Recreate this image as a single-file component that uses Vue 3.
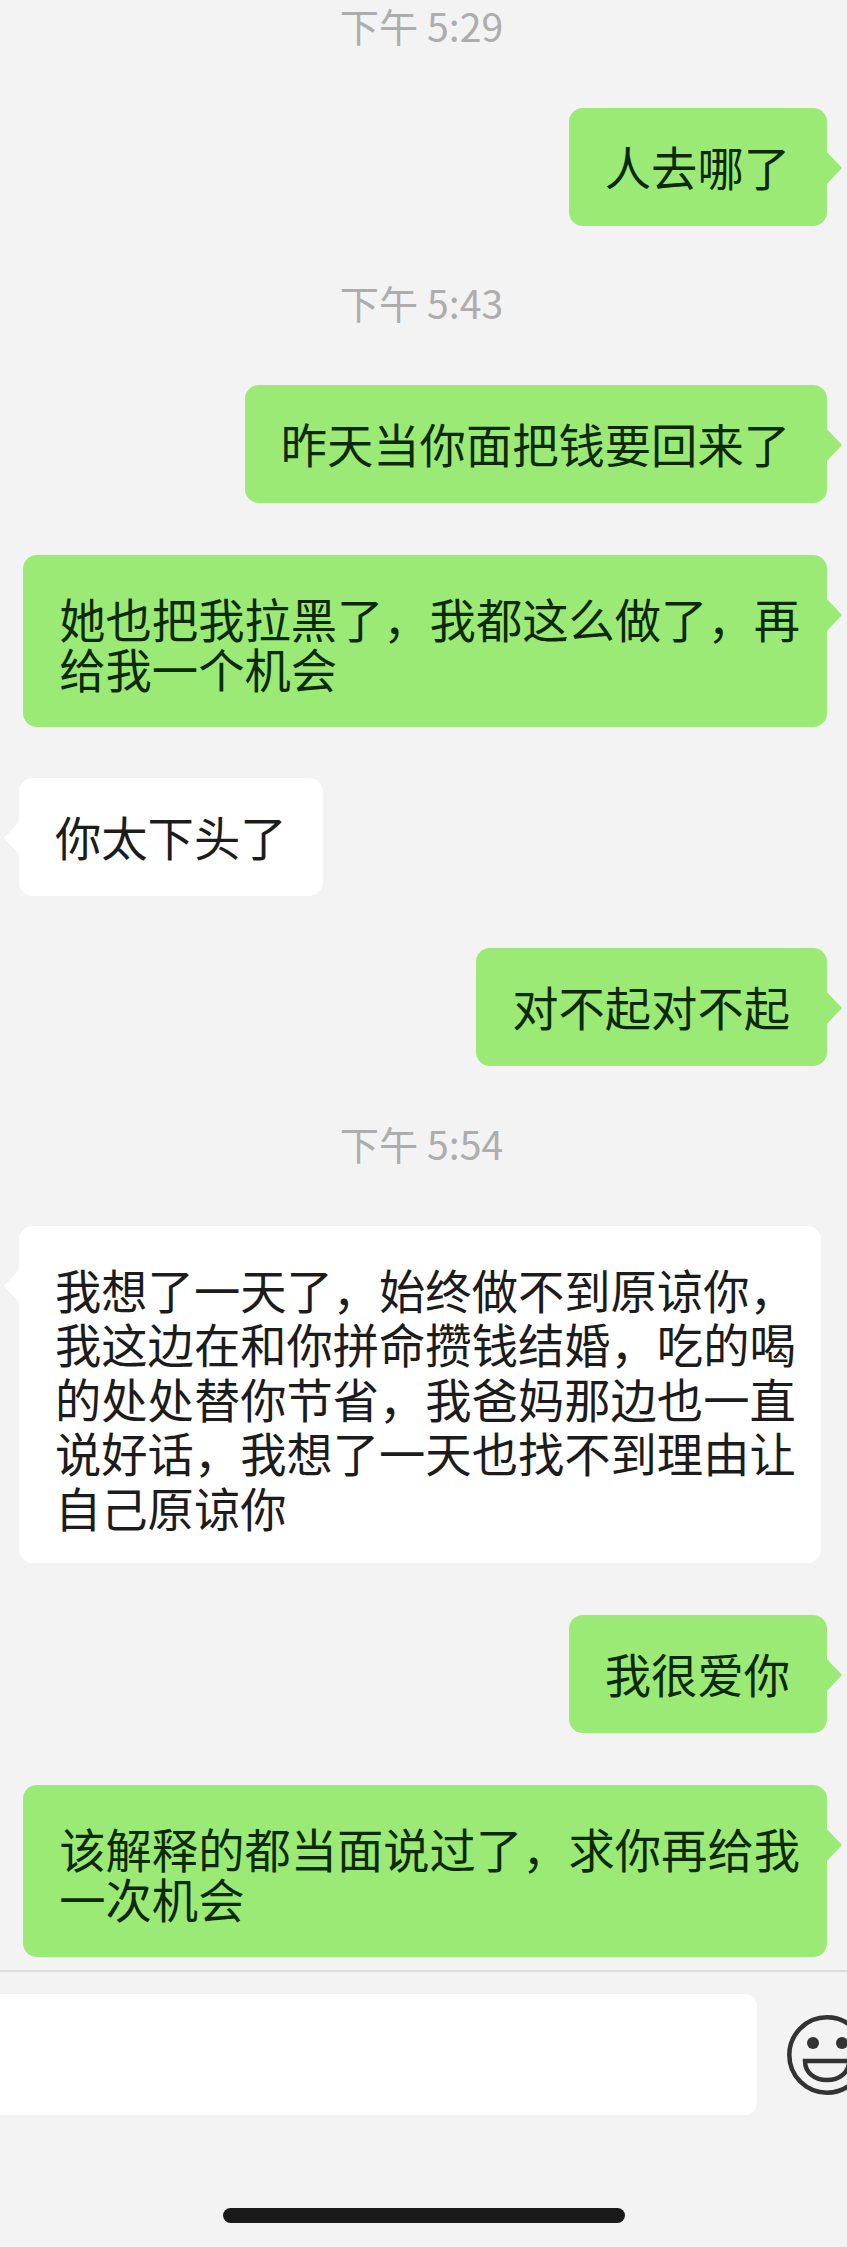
<script setup>
const items = [
  { type: 'time', lines: ['下午 5:29'] },
  { type: 'me', lines: ['人去哪了'] },
  { type: 'time', lines: ['下午 5:43'] },
  { type: 'me', lines: ['昨天当你面把钱要回来了'] },
  { type: 'me', size: 'multi', lines: ['她也把我拉黑了，我都这么做了，再', '给我一个机会'] },
  { type: 'other', lines: ['你太下头了'] },
  { type: 'me', lines: ['对不起对不起'] },
  { type: 'time', lines: ['下午 5:54'] },
  {
    type: 'other',
    size: 'multi long',
    lines: [
      '我想了一天了，始终做不到原谅你，',
      '我这边在和你拼命攒钱结婚，吃的喝',
      '的处处替你节省，我爸妈那边也一直',
      '说好话，我想了一天也找不到理由让',
      '自己原谅你'
    ]
  },
  { type: 'me', lines: ['我很爱你'] },
  { type: 'me', size: 'multi', lines: ['该解释的都当面说过了，求你再给我', '一次机会'] }
]
</script>

<template>
  <div class="page">
    <main class="chat">
      <template v-for="(item, i) in items" :key="i">
        <div v-if="item.type === 'time'" class="time">{{ item.lines[0] }}</div>
        <div v-else class="row" :class="item.type">
          <div class="bubble" :class="item.size">
            <div v-for="line in item.lines" :key="line" class="line">{{ line }}</div>
          </div>
        </div>
      </template>
    </main>
    <footer class="footer">
      <div class="inputbar">
        <div class="input"></div>
        <svg class="smile" width="80" height="80" viewBox="0 0 80 80" fill="none" stroke="#333" stroke-width="4.5">
          <circle cx="40" cy="40" r="37.7" />
          <circle cx="26" cy="28" r="6" fill="#333" stroke="none" />
          <circle cx="55" cy="28" r="6" fill="#333" stroke="none" />
          <path d="M18 46 H62 C62 58 52 65 40 65 C28 65 18 58 18 46 Z" />
        </svg>
      </div>
      <div class="home"></div>
    </footer>
  </div>
</template>

<style>
html, body { margin: 0; background: #f3f3f3; }
</style>

<style scoped>
.page {
  width: 847px;
  height: 2247px;
  overflow: hidden;
  background: #f3f3f3;
  font-family: "Noto Sans CJK SC", "Noto Sans", sans-serif;
}
.chat {
  display: flex;
  flex-direction: column;
  gap: 51.7px;
  height: 1970px;
  box-sizing: border-box;
}
.time {
  height: 56px;
  line-height: 50px;
  padding-right: 4px;
  text-align: center;
  font-size: 39.2px;
  color: #adadad;
}
.row { display: flex; }
.row.me { justify-content: flex-end; padding-right: 20px; }
.row.other { justify-content: flex-start; padding-left: 19px; }
.bubble {
  position: relative;
  padding: 31px 37px 33px 36px;
  border-radius: 14px;
  font-size: 46.3px;
  line-height: 54px;
  white-space: nowrap;
}
.bubble.multi { padding: 38px 27px 34px 36px; line-height: 50px; }
.bubble.long { padding: 36px 25px 29px 36px; line-height: 54.6px; }
.me .bubble { background: #9cea76; color: #0d2a08; }
.other .bubble { background: #fff; color: #1c1c1c; }
.bubble::after {
  content: "";
  position: absolute;
  top: 43px;
  width: 0;
  height: 0;
  border-top: 17px solid transparent;
  border-bottom: 17px solid transparent;
}
.me .bubble::after { right: -15px; border-left: 16px solid #9cea76; }
.other .bubble::after { left: -15px; border-right: 16px solid #fff; }
.footer {
  border-top: 2px solid #dcdcdc;
  box-sizing: border-box;
  height: 277px;
  overflow: hidden;
}
.inputbar {
  display: flex;
  align-items: center;
  gap: 30px;
  margin-top: 22px;
}
.input {
  flex: 0 0 757px;
  height: 121px;
  background: #fff;
  border-radius: 0 12px 12px 0;
}
.smile { flex-shrink: 0; }
.home {
  width: 402px;
  height: 15px;
  margin: 93px auto 0;
  background: #1a1a1a;
  border-radius: 8px;
}
</style>
